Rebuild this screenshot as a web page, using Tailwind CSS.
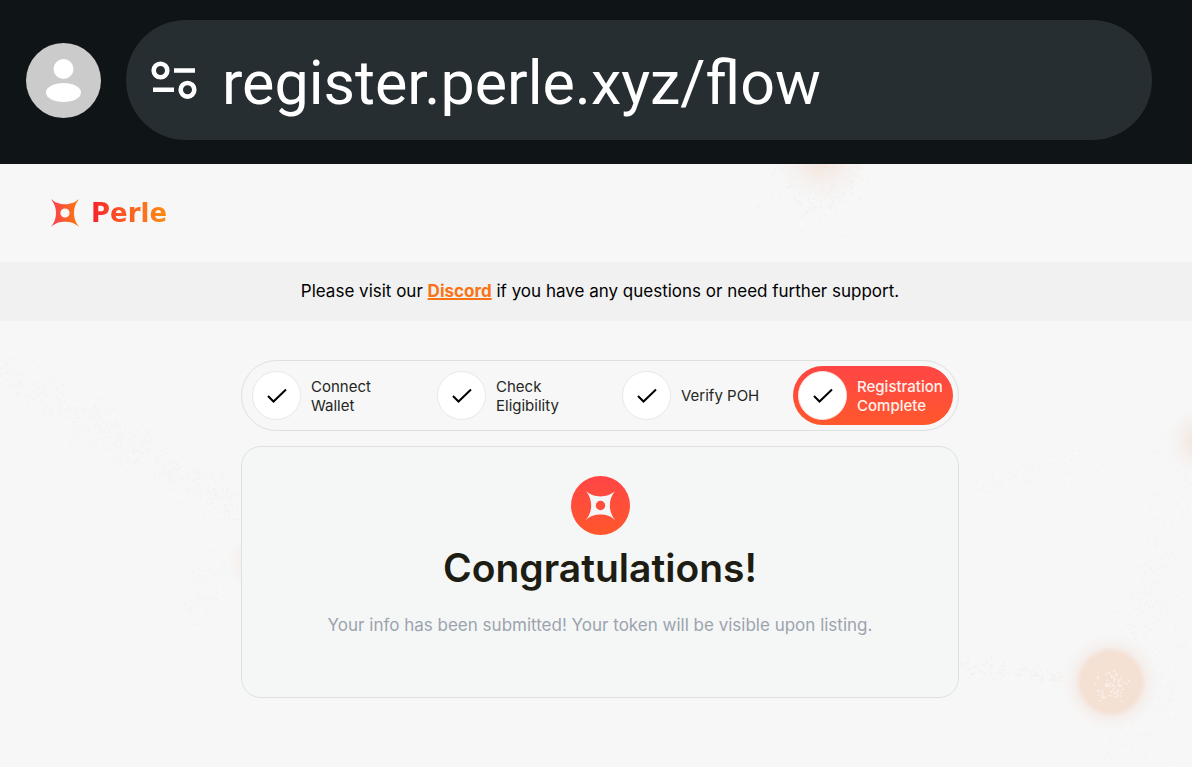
<!DOCTYPE html>
<html lang="en">

<head>
    <meta charset="UTF-8">
    <meta name="viewport" content="width=device-width, initial-scale=1">
    <title>Perle</title>
    <script src="https://cdn.jsdelivr.net/npm/@tailwindcss/browser@4"></script>
</head>

<body class="flex min-h-screen flex-col overflow-x-hidden bg-[#f7f7f7] font-[Inter,sans-serif]">

    <!-- Shared shapes -->
    <svg class="hidden">
        <symbol id="star" viewBox="0 0 28 28">
            <path fill-rule="evenodd"
                d="M0 0C4.500 4 9 5.200 14 5.200S23.500 4 28 0C24.500 4.500 23 9 23 14S24.500 23.500 28 28C23.500 24 19 22.800 14 22.800S4.500 24 0 28C3.500 23.500 5 19 5 14S3.500 4.500 0 0ZM14 9.400A4.600 4.600 0 1 0 14 18.600A4.600 4.600 0 1 0 14 9.400Z" />
        </symbol>
        <symbol id="check" viewBox="0 0 20 16">
            <path d="M1 8L6.500 13.500L19 1.500" fill="none" stroke="#000" stroke-width="2" />
        </symbol>
    </svg>

    <!-- Address bar -->
    <div class="flex items-center gap-[25px] bg-[#0f1416] pt-5 pr-10 pb-6 pl-[26px]">
        <button type="button" aria-label="Profile" class="shrink-0">
            <svg class="size-[75px]" viewBox="0 0 75 75">
                <circle cx="37.500" cy="37.500" r="37.500" fill="#cbcbcb" />
                <circle cx="37.500" cy="26" r="10" fill="#fff" />
                <ellipse cx="37.500" cy="49.500" rx="17.500" ry="9.500" fill="#fff" />
            </svg>
        </button>
        <div class="flex h-[120px] min-w-0 grow items-center gap-6 rounded-full bg-[#272e31] px-6">
            <button type="button" aria-label="Site information" class="shrink-0">
                <svg class="h-10 w-12" viewBox="0 0 48 40" fill="none" stroke="#fff" stroke-width="4.600">
                    <circle cx="10.500" cy="10.500" r="6.800" />
                    <path d="M24 10.500H45M3 29.800H24" />
                    <circle cx="37.500" cy="29.800" r="6.800" />
                </svg>
            </button>
            <input type="text" aria-label="Address" value="register.perle.xyz/flow"
                class="min-w-0 grow bg-transparent pt-2 font-[Roboto,sans-serif] text-[61px] text-white outline-none">
        </div>
    </div>

    <!-- Page -->
    <div class="relative grow overflow-hidden">
        <svg class="absolute inset-0 h-full w-full" viewBox="0 0 1192 603" preserveAspectRatio="xMidYMid slice" aria-hidden="true">
            <defs>
                <radialGradient id="glow">
                    <stop offset="0" stop-color="#f5e0d3" />
                    <stop offset=".35" stop-color="#f5e9e3" />
                    <stop offset=".6" stop-color="#f5f1ef" />
                    <stop offset="1" stop-color="#f7f7f7" />
                </radialGradient>
                <radialGradient id="node">
                    <stop offset="0" stop-color="#f5e0d4" />
                    <stop offset=".62" stop-color="#f5e0d4" />
                    <stop offset=".74" stop-color="#f5efec" />
                    <stop offset="1" stop-color="#f7f7f7" />
                </radialGradient>
            </defs>
            <g id="dust"></g>
            <circle cx="822" cy="-10" r="48" fill="url(#glow)" />
            <circle cx="1202" cy="277" r="36" fill="url(#glow)" />
            <circle cx="258" cy="398" r="30" fill="url(#glow)" />
            <circle cx="1111" cy="518" r="48" fill="url(#node)" />
            <g id="core"></g>
        </svg>

        <div class="relative">
            <header class="flex h-[98px] items-center px-[51px]">
                <a href="#" class="flex items-center gap-3">
                    <svg class="size-7" viewBox="0 0 28 28">
                        <defs>
                            <linearGradient id="brand">
                                <stop offset="0" stop-color="#fb3d50" />
                                <stop offset="1" stop-color="#fb7a10" />
                            </linearGradient>
                        </defs>
                        <use href="#star" fill="url(#brand)" />
                    </svg>
                    <span class="bg-gradient-to-r from-[#f8192a] to-[#fb8a10] bg-clip-text font-['DejaVu_Sans',sans-serif] text-[26px] leading-8 font-bold text-transparent">Perle</span>
                </a>
            </header>

            <div class="flex h-[59px] items-center justify-center bg-[#f1f1f1] pl-2 text-[17px] text-black">
                <p>Please visit our <a href="#" class="font-bold text-[#f97316] underline decoration-2">Discord</a> if you have any questions or need further support.</p>
            </div>

            <main class="flex flex-col items-center gap-[15px] pt-[39px] pr-4 pl-6">
                <ol class="grid w-full max-w-[718px] grid-cols-[185fr_185fr_176fr_160fr] rounded-full border border-[#dedfdf] p-[5px] text-[15px] leading-[19px] text-[#25261f]">
                    <li class="flex items-center gap-[10px] p-[5px]">
                        <span class="flex size-[49px] shrink-0 items-center justify-center rounded-full border border-[#e8e8e8] bg-white">
                            <svg class="h-4 w-5"><use href="#check" /></svg>
                        </span>
                        <span>Connect<br>Wallet</span>
                    </li>
                    <li class="flex items-center gap-[10px] p-[5px]">
                        <span class="flex size-[49px] shrink-0 items-center justify-center rounded-full border border-[#e8e8e8] bg-white">
                            <svg class="h-4 w-5"><use href="#check" /></svg>
                        </span>
                        <span>Check<br>Eligibility</span>
                    </li>
                    <li class="flex items-center gap-[10px] p-[5px]">
                        <span class="flex size-[49px] shrink-0 items-center justify-center rounded-full border border-[#e8e8e8] bg-white">
                            <svg class="h-4 w-5"><use href="#check" /></svg>
                        </span>
                        <span>Verify POH</span>
                    </li>
                    <li class="flex items-center gap-[10px] rounded-full bg-gradient-to-b from-[#ff4545] to-[#ff572b] p-[5px] font-medium text-[#fff1ec]">
                        <span class="flex size-[49px] shrink-0 items-center justify-center rounded-full border border-[#ffe4de] bg-white">
                            <svg class="h-4 w-5"><use href="#check" /></svg>
                        </span>
                        <span>Registration<br>Complete</span>
                    </li>
                </ol>

                <section class="flex w-full max-w-[718px] flex-col items-center rounded-[20px] border border-[#dde2e1] bg-[#f5f7f6] px-6 pt-[29px] pb-[60px] text-center">
                    <span class="flex size-[59px] items-center justify-center rounded-full bg-gradient-to-b from-[#ff4545] to-[#ff572b]">
                        <svg class="size-[29px]"><use href="#star" fill="#f5f7f6" /></svg>
                    </span>
                    <h1 class="mt-2 text-[39px] leading-[50px] font-semibold text-[#1d1d13]">Congratulations!</h1>
                    <p class="mt-5 text-[17px] leading-6 text-[#9ca3af]">Your info has been submitted! Your token will be visible upon listing.</p>
                </section>
            </main>
        </div>
    </div>

    <script>
        // Fixed seed so the dust looks the same on every load
        let seed = 7;
        function random() {
            seed = (seed * 16807) % 2147483647;
            return seed / 2147483647;
        }

        function spread() {
            return random() + random() + random() - 1.5;
        }

        // Scatter dots along the line from (x1, y1) to (x2, y2)
        function trail(target, count, x1, y1, x2, y2, width, color) {
            let dots = '';
            for (let i = 0; i < count; i++) {
                const t = random();
                const x = x1 + (x2 - x1) * t + spread() * width;
                const y = y1 + (y2 - y1) * t + spread() * width;
                dots += `<circle cx="${x.toFixed(1)}" cy="${y.toFixed(1)}" r="1" fill="${color}" />`;
            }
            document.getElementById(target).innerHTML += dots;
        }

        trail('dust', 700, -10, 200, 250, 350, 24, '#f4f3f3');
        trail('dust', 130, 250, 380, 180, 450, 28, '#f4f3f3');
        trail('dust', 150, 960, 328, 1190, 270, 20, '#f4f3f3');
        trail('dust', 260, 1190, 280, 1130, 500, 26, '#f4f3f3');
        trail('dust', 130, 955, 500, 1070, 515, 10, '#f3f1f0');
        trail('dust', 300, 1190, 450, 1120, 590, 50, '#f4f3f3');
        trail('core', 200, 822, 10, 822, 16, 46, '#f3efed');
        trail('core', 60, 1105, 521, 1121, 521, 13, '#f8f0ea');
    </script>
</body>

</html>
